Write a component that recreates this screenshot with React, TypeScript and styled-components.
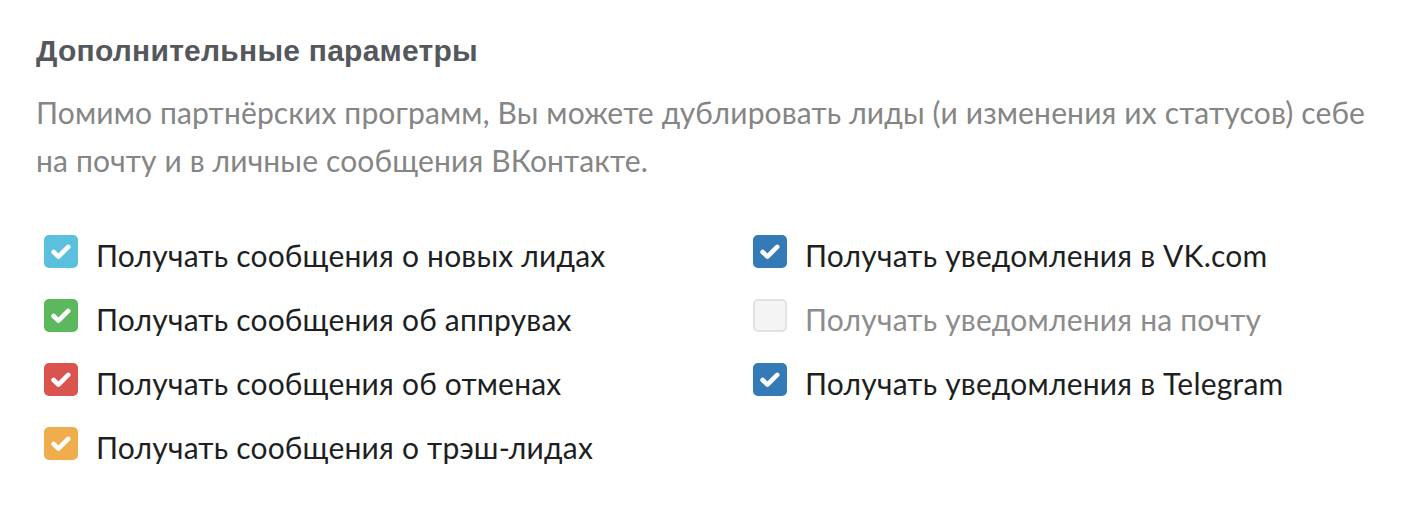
import React from "react";
import styled, { createGlobalStyle } from "styled-components";

const Global = createGlobalStyle`
  html, body { margin: 0; padding: 0; background: #ffffff; }
  body { font-family: Lato, "Open Sans", sans-serif; }
`;

const Page = styled.div`
  padding: 36px 20px 0 36px;
  width: 1404px;
  box-sizing: border-box;
`;

const Title = styled.h2`
  margin: 0;
  font-family: "Liberation Sans", Arial, sans-serif;
  font-weight: 700;
  font-size: 30px;
  line-height: 30px;
  letter-spacing: 0.25px;
  color: #54575c;
`;

const Lead = styled.p`
  margin: 22px 0 0 0;
  font-size: 30px;
  line-height: 48px;
  letter-spacing: 0.15px;
  color: #858585;
  max-width: 1345px;
`;

const Options = styled.div`
  margin: 51px 0 0 8px;
  display: grid;
  grid-template-columns: 709px auto;
  grid-auto-flow: column;
  grid-template-rows: repeat(4, 40px);
  row-gap: 24px;
`;

const Row = styled.label`
  display: flex;
  align-items: flex-start;
  gap: 18px;
  cursor: pointer;
`;

const Box = styled.span<{ $color?: string }>`
  flex: none;
  width: 34px;
  height: 33px;
  border-radius: 5px;
  box-sizing: border-box;
  display: flex;
  align-items: center;
  justify-content: center;
  background: ${(p) => p.$color ?? "#f4f4f4"};
  border: ${(p) => (p.$color ? "none" : "2px solid #e2e2e2")};
`;

const Label = styled.span<{ $muted?: boolean }>`
  font-size: 30px;
  line-height: 40px;
  letter-spacing: 0.2px;
  color: ${(p) => (p.$muted ? "#8c8c8c" : "#1d1f22")};
  white-space: nowrap;
`;

const Check = () => (
  <svg width="20" height="16" viewBox="0 0 20 16" aria-hidden="true">
    <path
      d="M2.6 8 L7.4 12.6 L17.2 2.9"
      fill="none"
      stroke="#ffffff"
      strokeWidth="4.6"
      strokeLinecap="round"
      strokeLinejoin="round"
    />
  </svg>
);

type Item = { text: string; color?: string };

const items: Item[] = [
  { text: "Получать сообщения о новых лидах", color: "#5bc0de" },
  { text: "Получать сообщения об аппрувах", color: "#5cb85c" },
  { text: "Получать сообщения об отменах", color: "#d9534f" },
  { text: "Получать сообщения о трэш-лидах", color: "#f0ad4e" },
  { text: "Получать уведомления в VK.com", color: "#337ab7" },
  { text: "Получать уведомления на почту" },
  { text: "Получать уведомления в Telegram", color: "#337ab7" },
];

export default function App() {
  return (
    <>
      <Global />
      <Page>
        <Title>Дополнительные параметры</Title>
        <Lead>
          Помимо партнёрских программ, Вы можете дублировать лиды (и изменения их статусов) себе на почту и в
          личные сообщения ВКонтакте.
        </Lead>
        <Options>
          {items.map((it) => (
            <Row key={it.text}>
              <Box $color={it.color}>{it.color && <Check />}</Box>
              <Label $muted={!it.color}>{it.text}</Label>
            </Row>
          ))}
        </Options>
      </Page>
    </>
  );
}
